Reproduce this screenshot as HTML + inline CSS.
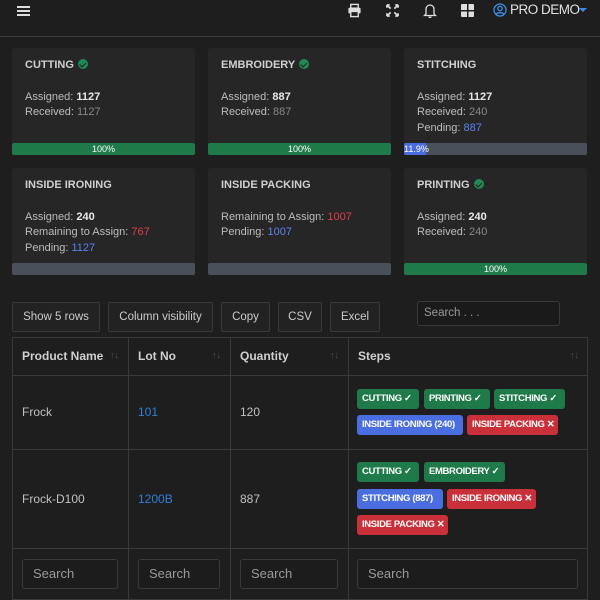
<!DOCTYPE html>
<html><head><style>
*{box-sizing:border-box;margin:0;padding:0}
body{width:600px;height:600px;overflow:hidden;background:#1e1e1e;font-family:"Liberation Sans",sans-serif;color:#c8c8c8;position:relative;font-size:11px;line-height:1.2}
.a{position:absolute}
.hdr{left:0;top:0;width:600px;height:37px;border-bottom:1px solid #3a3a3a;background:#1e1e1e}
.card{background:#262626;border-radius:3px;width:183px;height:107px}
.card .t{position:absolute;left:13px;top:11px;font-weight:bold;font-size:11px;color:#d0d0d0}
.card .l{position:absolute;left:13px;font-size:11px;color:#bdbdbd}
.card b{color:#e8e8e8}
.g{color:#888}.bl{color:#5b83f0}.rd{color:#e0404a}
.bar{position:absolute;left:0;bottom:0;width:183px;height:12px;background:#4a5059;border-radius:2px;font-size:9px;color:#fff;text-align:center;line-height:12px;overflow:hidden}
.bar.full{background:#1f7a4a}
.chk{display:inline-block;width:10px;height:10px;border-radius:50%;background:#1f8a55;vertical-align:-1px;margin-left:4px;position:relative}
.chk:after{content:"";position:absolute;left:3px;top:1.5px;width:2.5px;height:4.5px;border:solid #1e1e1e;border-width:0 1.5px 1.5px 0;transform:rotate(45deg)}
.btn{border:1px solid #3a3a3a;background:#222;height:30px;line-height:28px;text-align:center;font-size:11.5px;color:#ccc;border-radius:2px}
.tb{left:12px;top:337px;width:576px;height:263px;border:1px solid #3a3a3a}
.vl{top:337px;width:1px;height:263px;background:#3a3a3a}
.hl{left:12px;width:576px;height:1px;background:#3a3a3a}
.th{font-weight:bold;font-size:12px;color:#d0d0d0;top:349px}
.sort{top:350px;font-size:9px;color:#555}
.td{font-size:12px;color:#c0c0c0}
.bd{position:absolute;height:20px;line-height:20px;padding:0 5px;border-radius:3px;font-size:9.5px;font-weight:bold;color:#fff;letter-spacing:-0.35px;white-space:nowrap}
.G{background:#1f7a4a}.B{background:#4a6ee0}.R{background:#c9303a}
.si{border:1px solid #3a3a3a;background:#1c1c1c;border-radius:3px;height:30px;line-height:28px;padding-left:10px;font-size:13px;color:#999}
</style></head><body>
<div class="a hdr"></div>
<div class="a" style="left:17px;top:6px;width:13px;height:2px;background:#ddd;box-shadow:0 4px 0 #ddd,0 8px 0 #ddd"></div>
<svg class="a" style="left:347px;top:3px" width="15" height="15" viewBox="0 0 16 16"><rect x="4" y="1.5" width="8" height="4" fill="none" stroke="#ddd" stroke-width="1.5"/><rect x="1.5" y="5" width="13" height="6" rx="1" fill="#ddd"/><rect x="4" y="9" width="8" height="5.5" fill="#1e1e1e" stroke="#ddd" stroke-width="1.5"/></svg>
<svg class="a" style="left:386px;top:4px" width="13" height="13" viewBox="0 0 14 14" stroke="#ddd" stroke-width="1.8" fill="none"><path d="M1 1l4 4M13 1l-4 4M1 13l4-4M13 13l-4-4M1 1h3M1 1v3M13 1h-3M13 1v3M1 13h3M1 13v-3M13 13h-3M13 13v-3"/></svg>
<svg class="a" style="left:423px;top:3px" width="14" height="15" viewBox="0 0 14 15" fill="none" stroke="#ddd" stroke-width="1.3"><path d="M3 11V6a4 4 0 0 1 8 0v5l1.5 1.5h-11z"/><path d="M6 13.5a1 1 0 0 0 2 0"/></svg>
<div class="a" style="left:461px;top:4px;width:13px;height:13px;background:linear-gradient(#1e1e1e,#1e1e1e) 6px 0/1.5px 13px no-repeat,linear-gradient(#1e1e1e,#1e1e1e) 0 6px/13px 1.5px no-repeat,#ddd;border-radius:1px"></div>
<svg class="a" style="left:493px;top:3px" width="14" height="14" viewBox="0 0 14 14" fill="none" stroke="#3a8ee8" stroke-width="1.3"><circle cx="7" cy="7" r="6"/><circle cx="7" cy="5.5" r="2.2"/><path d="M3 11.2c1.5-2 6.5-2 8 0"/></svg>
<div class="a" style="left:510px;top:2px;font-size:13.5px;color:#e0e0e0;letter-spacing:-0.5px">PRO DEMO</div>
<div class="a" style="left:579px;top:8px;border:4px solid transparent;border-top-color:#3a8ee8;border-bottom:0"></div>

<div class="a card" style="left:12px;top:48px"><div class="t">CUTTING<span class="chk"></span></div><div class="l" style="top:43px">Assigned: <b>1127</b></div><div class="l" style="top:58px">Received: <span class="g">1127</span></div><div class="bar full">100%</div></div>
<div class="a card" style="left:208px;top:48px"><div class="t">EMBROIDERY<span class="chk"></span></div><div class="l" style="top:43px">Assigned: <b>887</b></div><div class="l" style="top:58px">Received: <span class="g">887</span></div><div class="bar full">100%</div></div>
<div class="a card" style="left:404px;top:48px"><div class="t">STITCHING</div><div class="l" style="top:43px">Assigned: <b>1127</b></div><div class="l" style="top:58px">Received: <span class="g">240</span></div><div class="l" style="top:74px">Pending: <span class="bl">887</span></div><div class="bar"><div style="width:22px;height:12px;background:#4a6ee0;text-align:left">11.9%</div></div></div>
<div class="a card" style="left:12px;top:168px"><div class="t">INSIDE IRONING</div><div class="l" style="top:43px">Assigned: <b>240</b></div><div class="l" style="top:58px">Remaining to Assign: <span class="rd">767</span></div><div class="l" style="top:74px">Pending: <span class="bl">1127</span></div><div class="bar"></div></div>
<div class="a card" style="left:208px;top:168px"><div class="t">INSIDE PACKING</div><div class="l" style="top:43px">Remaining to Assign: <span class="rd">1007</span></div><div class="l" style="top:58px">Pending: <span class="bl">1007</span></div><div class="bar"></div></div>
<div class="a card" style="left:404px;top:168px"><div class="t">PRINTING<span class="chk"></span></div><div class="l" style="top:43px">Assigned: <b>240</b></div><div class="l" style="top:58px">Received: <span class="g">240</span></div><div class="bar full">100%</div></div>

<div class="a btn" style="left:12px;top:302px;width:88px">Show 5 rows</div>
<div class="a btn" style="left:108px;top:302px;width:105px">Column visibility</div>
<div class="a btn" style="left:221px;top:302px;width:49px">Copy</div>
<div class="a btn" style="left:278px;top:302px;width:44px">CSV</div>
<div class="a btn" style="left:330px;top:302px;width:50px">Excel</div>
<div class="a" style="left:417px;top:301px;width:143px;height:25px;border:1px solid #3a3a3a;background:#1a1a1a;border-radius:3px;padding:5px 6px;font-size:11.5px;color:#999">Search . . .</div>

<div class="a tb"></div>
<div class="a vl" style="left:128px"></div><div class="a vl" style="left:230px"></div><div class="a vl" style="left:348px"></div>
<div class="a hl" style="top:375px"></div><div class="a hl" style="top:449px"></div><div class="a hl" style="top:548px"></div>
<div class="a th" style="left:22px">Product Name</div><div class="a th" style="left:138px">Lot No</div><div class="a th" style="left:240px">Quantity</div><div class="a th" style="left:358px">Steps</div>
<div class="a sort" style="left:110px">↑↓</div><div class="a sort" style="left:212px">↑↓</div><div class="a sort" style="left:330px">↑↓</div><div class="a sort" style="left:570px">↑↓</div>

<div class="a td" style="left:22px;top:405px">Frock</div><div class="a td" style="left:138px;top:405px;color:#2f7fd8">101</div><div class="a td" style="left:240px;top:405px">120</div>
<div class="bd G" style="left:357px;top:389px;width:62px">CUTTING ✓</div><div class="bd G" style="left:424px;top:389px;width:66px">PRINTING ✓</div><div class="bd G" style="left:494px;top:389px;width:71px">STITCHING ✓</div>
<div class="bd B" style="left:357px;top:415px;width:106px">INSIDE IRONING (240)</div><div class="bd R" style="left:467px;top:415px;width:91px">INSIDE PACKING ✕</div>

<div class="a td" style="left:22px;top:492px">Frock-D100</div><div class="a td" style="left:138px;top:492px;color:#2f7fd8">1200B</div><div class="a td" style="left:240px;top:492px">887</div>
<div class="bd G" style="left:357px;top:462px;width:62px">CUTTING ✓</div><div class="bd G" style="left:424px;top:462px;width:81px">EMBROIDERY ✓</div>
<div class="bd B" style="left:357px;top:489px;width:86px">STITCHING (887)</div><div class="bd R" style="left:447px;top:489px;width:89px">INSIDE IRONING ✕</div>
<div class="bd R" style="left:357px;top:515px;width:91px">INSIDE PACKING ✕</div>

<div class="a si" style="left:22px;top:559px;width:96px">Search</div>
<div class="a si" style="left:138px;top:559px;width:82px">Search</div>
<div class="a si" style="left:240px;top:559px;width:98px">Search</div>
<div class="a si" style="left:357px;top:559px;width:221px">Search</div>
</body></html>
